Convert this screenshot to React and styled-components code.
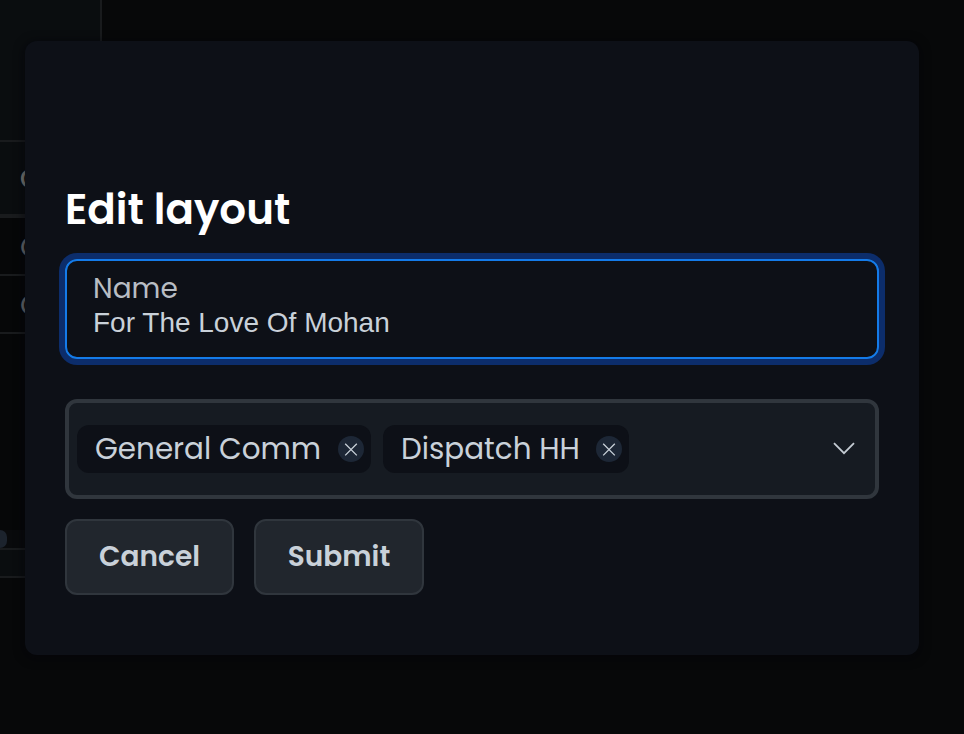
import React from "react";
import styled, { createGlobalStyle } from "styled-components";

const GlobalStyle = createGlobalStyle`
  *, *::before, *::after { box-sizing: border-box; }
  html, body { margin: 0; height: 100%; overflow: hidden; background: #070809; }
  body {
    font-family: Poppins, Inter, sans-serif;
    color: #c9d1d9;
    -webkit-font-smoothing: antialiased;
  }
  button, input { font: inherit; color: inherit; }
`;

const Page = styled.div`
  height: 734px;
  overflow: hidden;
  background: #070809;
`;

const Sidebar = styled.aside`
  width: 102px;
  display: flex;
  flex-direction: column;
`;

const SidebarRow = styled.div`
  height: ${(p) => p.$height}px;
  padding-left: 20px;
  display: flex;
  align-items: center;
  overflow: hidden;
  background: ${(p) => (p.$raised ? "#0a0d0f" : "#060708")};
  border-bottom: ${(p) => p.$line ?? 2}px solid #191b1d;
  border-right: ${(p) => (p.$edge ? "2px solid #191b1d" : "0")};
`;

const SidebarText = styled.span`
  padding-top: 2px;
  font-size: ${(p) => (p.$heading ? 26 : 29)}px;
  font-weight: ${(p) => (p.$heading ? 500 : 400)};
  color: ${(p) => (p.$heading ? "#7d7d78" : "#6a6d70")};
`;

const ScrollTrack = styled.div`
  height: 18px;
  background: #090a0c;
`;

const ScrollThumb = styled.div`
  width: 7px;
  height: 18px;
  border-radius: 0 9px 9px 0;
  background: #1c232d;
`;

const Dialog = styled.section`
  position: absolute;
  left: 25px;
  top: 41px;
  width: 894px;
  height: 614px;
  padding: 144px 40px 0;
  border-radius: 12px;
  background: #0d1017;
  box-shadow: 0 2px 10px 2px rgba(3, 3, 9, 0.55);
`;

const Title = styled.h1`
  margin: 0;
  height: 74px;
  font-size: 42px;
  font-weight: 600;
  line-height: 50px;
  white-space: nowrap;
  color: #fff;
`;

const Field = styled.label`
  display: flex;
  flex-direction: column;
  height: 100px;
  padding: 11px 26px 0;
  border: 2px solid #147be9;
  border-radius: 12px;
  box-shadow: 0 0 0 6px #0c2d6b;
`;

const FieldLabel = styled.span`
  height: 34px;
  font-size: 28px;
  line-height: 34px;
  color: #b8bdc4;
`;

const FieldInput = styled.input`
  height: 34px;
  padding: 0;
  border: 0;
  outline: 0;
  background: transparent;
  font-family: "Liberation Sans", Arial, sans-serif;
  font-size: 28px;
  line-height: 34px;
  color: #c9d1d9;
`;

const Select = styled.div`
  display: flex;
  align-items: center;
  gap: 12px;
  height: 100px;
  margin-top: 40px;
  padding: 0 20px 0 8px;
  border: 4px solid #30363d;
  border-radius: 12px;
  background: #161b22;
`;

const Chip = styled.div`
  display: flex;
  align-items: center;
  justify-content: space-between;
  width: ${(p) => p.$width}px;
  height: 48px;
  padding: 0 7px 0 18px;
  border-radius: 12px;
  background: #0d1017;
`;

const ChipText = styled.span`
  font-size: 29.4px;
  line-height: 48px;
  white-space: nowrap;
`;

const ChipRemove = styled.button`
  display: grid;
  place-items: center;
  width: 26px;
  height: 26px;
  padding: 0;
  border: 0;
  border-radius: 50%;
  background: #1d2736;
`;

const Chevron = styled.svg`
  margin-left: auto;
`;

const Actions = styled.div`
  display: flex;
  gap: 20px;
  margin-top: 20px;
`;

const ActionButton = styled.button`
  width: ${(p) => p.$width}px;
  height: 76px;
  padding: 0;
  border: 2px solid #30363d;
  border-radius: 12px;
  background: #21262d;
  font-size: 28px;
  font-weight: 600;
  color: #c9d1d9;
`;

const CHANNELS = [
  { name: "General Comm", width: 294 },
  { name: "Dispatch HH", width: 246 },
];

function Channel({ name, width }) {
  return (
    <Chip $width={width}>
      <ChipText>{name}</ChipText>
      <ChipRemove aria-label={`Remove ${name}`}>
        <svg width="14" height="14" viewBox="0 0 14 14" fill="none" stroke="#c9d1d9" strokeWidth="1.3">
          <path d="M1.2 1.8 12.8 13.4M12.8 1.8 1.2 13.4" />
        </svg>
      </ChipRemove>
    </Chip>
  );
}

export default function App() {
  return (
    <>
      <GlobalStyle />
      <Page>
        <Sidebar>
          <SidebarRow $height={142} $raised $edge />
          <SidebarRow $height={76} $line={4} $raised>
            <SidebarText $heading>C</SidebarText>
          </SidebarRow>
          <SidebarRow $height={58}>
            <SidebarText>C</SidebarText>
          </SidebarRow>
          <SidebarRow $height={58}>
            <SidebarText>C</SidebarText>
          </SidebarRow>
          <SidebarRow $height={196} $line={0} />
          <ScrollTrack>
            <ScrollThumb />
          </ScrollTrack>
          <SidebarRow $height={2} />
          <SidebarRow $height={28} $raised />
        </Sidebar>
        <Dialog role="dialog" aria-label="Edit layout">
          <Title>Edit layout</Title>
          <Field>
            <FieldLabel>Name</FieldLabel>
            <FieldInput defaultValue="For The Love Of Mohan" />
          </Field>
          <Select>
            {CHANNELS.map((c) => (
              <Channel key={c.name} {...c} />
            ))}
            <Chevron width="22" height="14" viewBox="0 0 22 14" fill="none" stroke="#c4cbd3" strokeWidth="1.8">
              <path d="M1 1.2 11 11.2 21 1.2" />
            </Chevron>
          </Select>
          <Actions>
            <ActionButton $width={169}>Cancel</ActionButton>
            <ActionButton $width={170}>Submit</ActionButton>
          </Actions>
        </Dialog>
      </Page>
    </>
  );
}
